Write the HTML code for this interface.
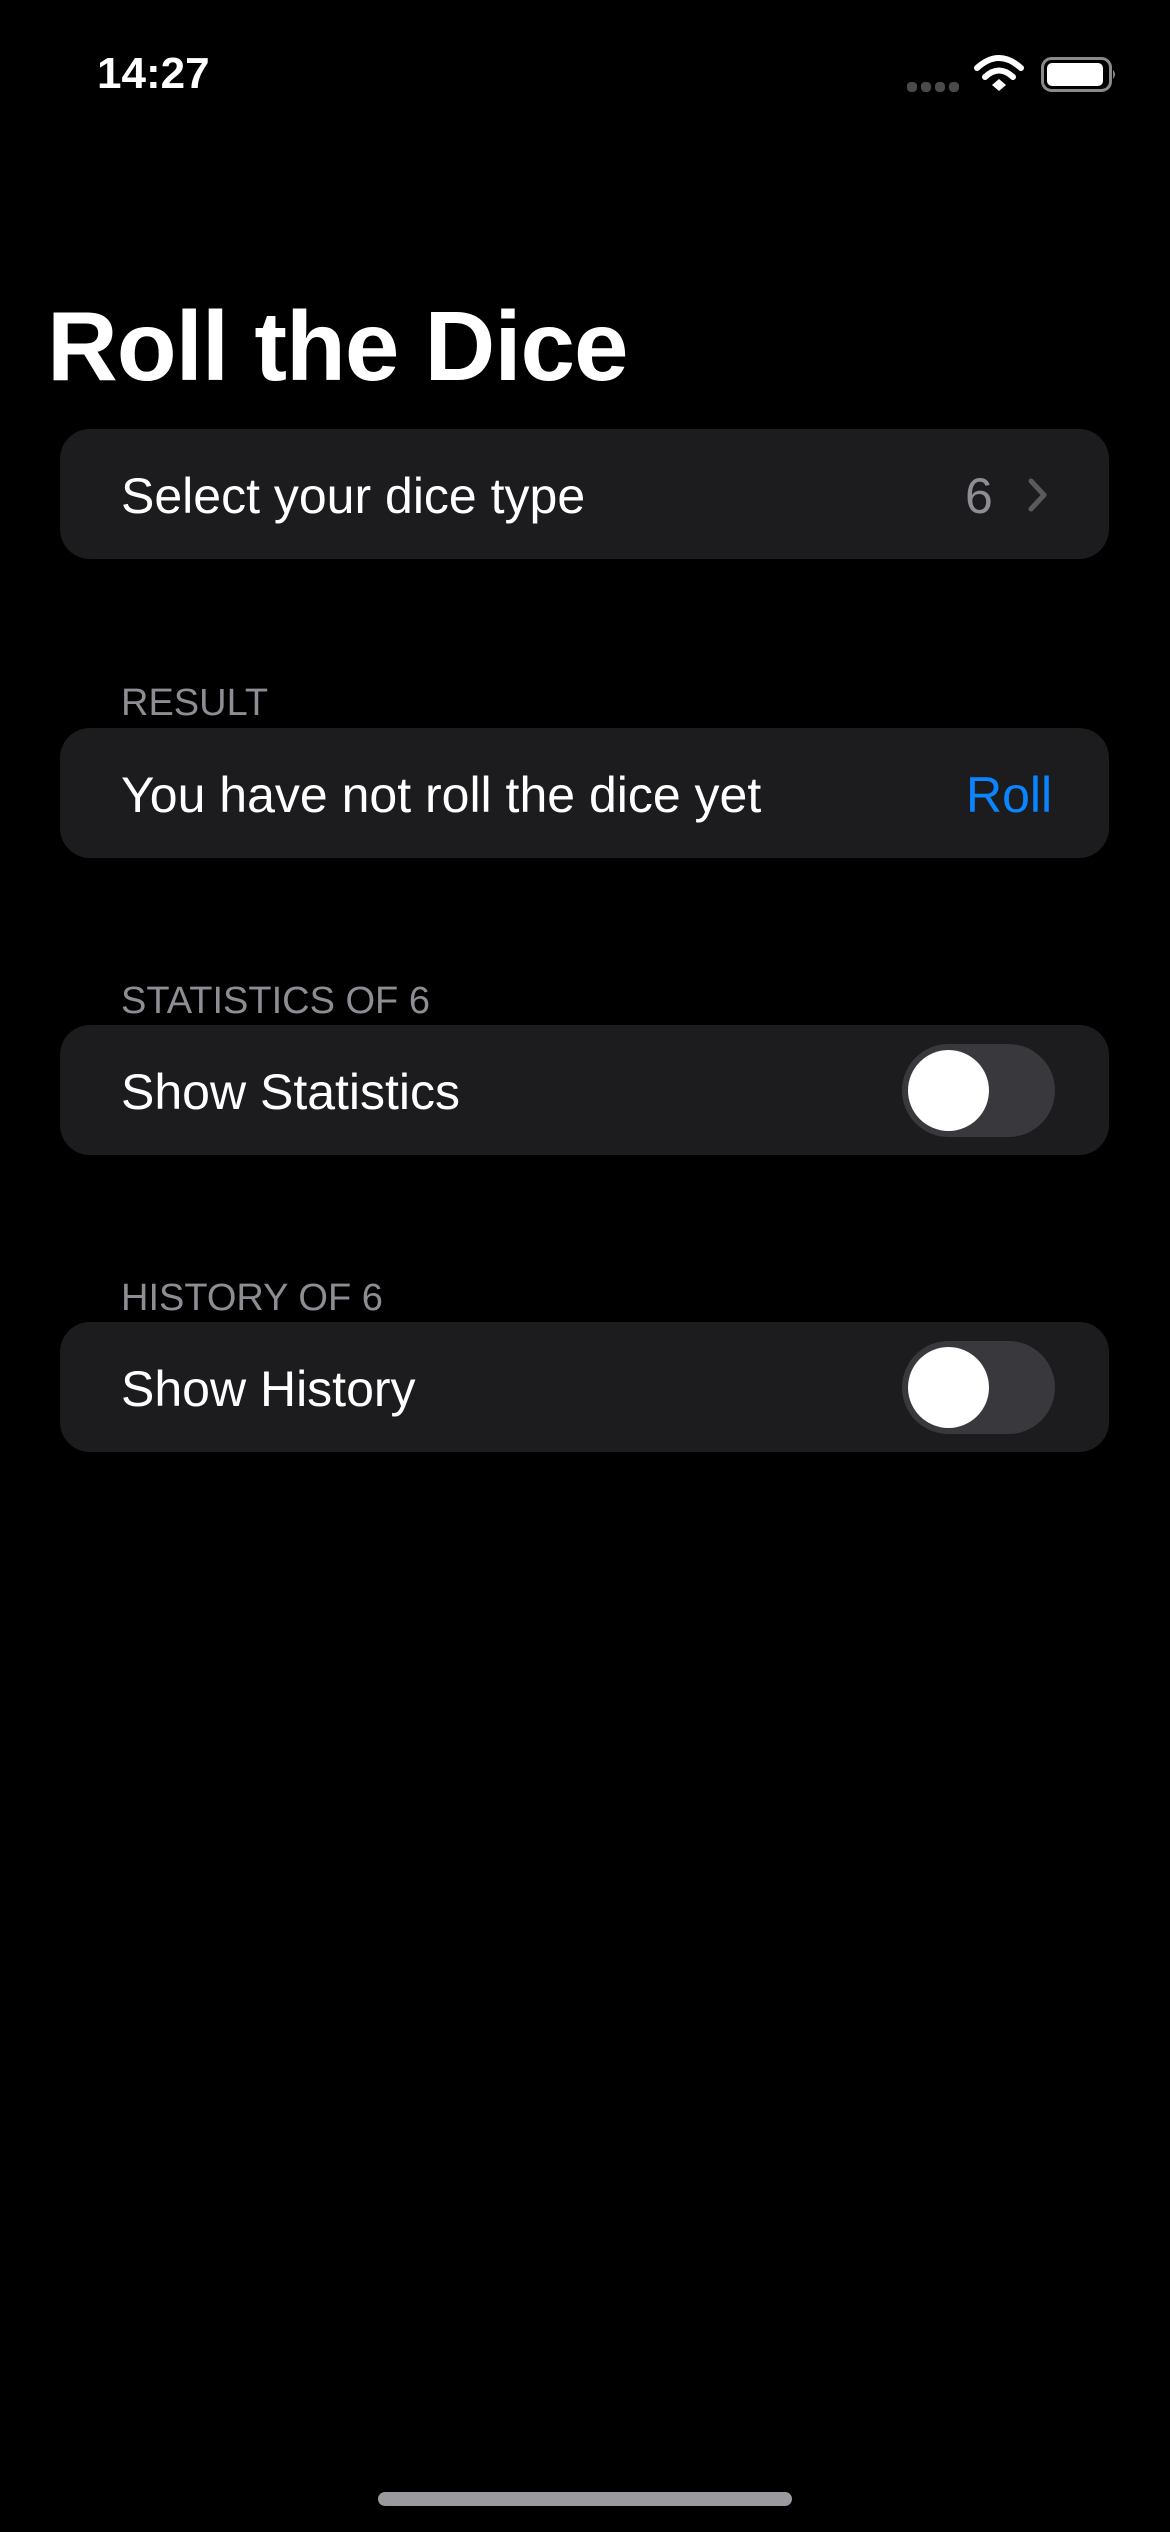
<!DOCTYPE html>
<html><head><meta charset="utf-8"><style>
*{margin:0;padding:0;box-sizing:border-box}
body{width:1170px;height:2532px;background:#000;position:relative;overflow:hidden;font-family:"Liberation Sans",sans-serif;color:#fff}
.abs{position:absolute}
.card{position:absolute;left:60px;width:1049px;height:130px;background:#1c1c1e;border-radius:30px}
.lbl{position:absolute;left:61px;top:2px;height:130px;line-height:130px;font-size:50px}
.hdr{position:absolute;left:121px;font-size:38px;color:#8d8d93;line-height:44px}
.tog{position:absolute;left:842px;top:19px;width:153px;height:93px;border-radius:47px;background:#39393d}
.tog i{position:absolute;left:6px;top:6px;width:81px;height:81px;border-radius:50%;background:#fff}
</style></head><body>
<div class="abs" style="left:97px;top:50px;font-size:44px;font-weight:bold;line-height:48px">14:27</div>
<svg class="abs" style="left:900px;top:50px" width="230" height="50" viewBox="900 50 230 50">
<g fill="#4a4a4c"><rect x="907" y="82" width="10" height="10" rx="4"/><rect x="921" y="82" width="10" height="10" rx="4"/><rect x="935" y="82" width="10" height="10" rx="4"/><rect x="949" y="82" width="10" height="10" rx="4"/></g>
<g fill="none" stroke="#fff" stroke-width="6" stroke-linecap="round"><path d="M977 68 Q999 48 1021 68"/><path d="M985 77 Q999 64 1013 77"/></g>
<path d="M992 85 L999 79 L1006 85 L999 91 Z" fill="#fff"/>
<rect x="1042.5" y="58.5" width="68" height="32" rx="9" fill="none" stroke="#8a8a8e" stroke-width="3"/>
<rect x="1047" y="63" width="56" height="23" rx="5" fill="#fff"/>
<path d="M1113 70 Q1117 74 1113 79 Z" fill="#8a8a8e"/>
</svg>
<div class="abs" style="left:47px;top:286px;font-size:98px;font-weight:bold;line-height:120px;letter-spacing:-1px">Roll the Dice</div>

<div class="card" style="top:429px"><div class="lbl">Select your dice type</div>
<div class="abs" style="left:905px;top:2px;line-height:130px;font-size:50px;color:#8d8d93">6</div>
<svg class="abs" style="left:966px;top:48px" width="24" height="36" viewBox="0 0 24 36"><path d="M5 4 L18 18 L5 32" fill="none" stroke="#5a5a5e" stroke-width="5" stroke-linecap="round" stroke-linejoin="round"/></svg>
</div>
<div class="hdr" style="top:661px;margin-top:20px">RESULT</div>
<div class="card" style="top:728px"><div class="lbl">You have not roll the dice yet</div>
<div class="abs" style="left:906px;top:2px;line-height:130px;font-size:50px;color:#0a84ff">Roll</div></div>
<div class="hdr" style="top:979px">STATISTICS OF 6</div>
<div class="card" style="top:1025px"><div class="lbl">Show Statistics</div><div class="tog"><i></i></div></div>
<div class="hdr" style="top:1276px">HISTORY OF 6</div>
<div class="card" style="top:1322px"><div class="lbl">Show History</div><div class="tog"><i></i></div></div>
<div class="abs" style="left:378px;top:2492px;width:414px;height:14px;border-radius:7px;background:#9a9a9e"></div>
</body></html>
